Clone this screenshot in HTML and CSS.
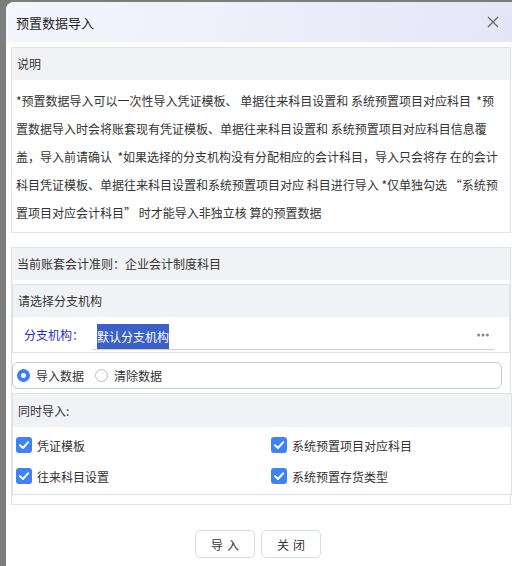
FILE: index.html
```html
<!DOCTYPE html>
<html lang="zh">
<head>
<meta charset="utf-8">
<link rel="stylesheet" href="styles.css">
</head>
<body>
<div class="dialog">
  <div class="titlebar">
    <span class="title">预置数据导入</span>
    <svg class="close" width="12" height="12" viewBox="0 0 12 12"><path d="M1 1L11 11M11 1L1 11" stroke="#666" stroke-width="1.2" fill="none"/></svg>
  </div>
  <div class="content">
    <div class="box desc">
      <div class="sec-head">说明</div>
      <p class="desc-text">*预置数据导入可以一次性导入凭证模板、 单据往来科目设置和 系统预置项目对应科目&nbsp; *预<br>置数据导入时会将账套现有凭证模板、单据往来科目设置和 系统预置项目对应科目信息覆<br>盖，导入前请确认&nbsp; *如果选择的分支机构没有分配相应的会计科目，导入只会将存 在的会计<br>科目凭证模板、单据往来科目设置和系统预置项目对应 科目进行导入 *仅单独勾选 “系统预<br>置项目对应会计科目” 时才能导入非独立核 算的预置数据</p>
    </div>
    <div class="box acct">
      <div class="sec-head">当前账套会计准则：企业会计制度科目</div>
      <div class="box branch">
        <div class="sec-head">请选择分支机构</div>
        <div class="branch-row">
          <span class="branch-label">分支机构：</span>
          <div class="branch-input">
            <span class="selected">默认分支机构</span>
            <svg class="dots" width="12" height="4" viewBox="0 0 12 4"><circle cx="1.6" cy="2" r="1.5" fill="#888"/><circle cx="6" cy="2" r="1.5" fill="#888"/><circle cx="10.4" cy="2" r="1.5" fill="#888"/></svg>
          </div>
        </div>
      </div>
      <div class="radios">
        <label class="radio"><span class="rdot on"></span>导入数据</label>
        <label class="radio"><span class="rdot"></span>清除数据</label>
      </div>
      <div class="box imports">
        <div class="sec-head tall">同时导入:</div>
        <div class="checks">
          <label class="check"><span class="cb"><svg width="16" height="16" viewBox="0 0 16 16"><path d="M4 8.2L7 11L12.2 5.2" stroke="#fff" stroke-width="2" fill="none" stroke-linecap="round" stroke-linejoin="round"/></svg></span>凭证模板</label>
          <label class="check"><span class="cb"><svg width="16" height="16" viewBox="0 0 16 16"><path d="M4 8.2L7 11L12.2 5.2" stroke="#fff" stroke-width="2" fill="none" stroke-linecap="round" stroke-linejoin="round"/></svg></span>系统预置项目对应科目</label>
          <label class="check"><span class="cb"><svg width="16" height="16" viewBox="0 0 16 16"><path d="M4 8.2L7 11L12.2 5.2" stroke="#fff" stroke-width="2" fill="none" stroke-linecap="round" stroke-linejoin="round"/></svg></span>往来科目设置</label>
          <label class="check"><span class="cb"><svg width="16" height="16" viewBox="0 0 16 16"><path d="M4 8.2L7 11L12.2 5.2" stroke="#fff" stroke-width="2" fill="none" stroke-linecap="round" stroke-linejoin="round"/></svg></span>系统预置存货类型</label>
        </div>
      </div>
    </div>
  </div>
  <div class="footer">
    <button class="btn">导入</button>
    <button class="btn">关闭</button>
  </div>
</div>
</body>
</html>
```
FILE: styles.css
```css
* { box-sizing: border-box; }
html, body { margin: 0; padding: 0; }
body {
  background: #7d7d7d;
  width: 512px;
  height: 566px;
  overflow: hidden;
  font-family: "Noto Sans CJK SC", "Noto Sans", sans-serif;
  font-size: 12px;
  color: #333;
}
.dialog {
  margin: 2px 0 0 6px;
  width: 520px;
  height: 580px;
  background: #fff;
  border-radius: 8px;
  overflow: hidden;
}
.titlebar {
  height: 40px;
  display: flex;
  align-items: center;
  justify-content: space-between;
  padding: 0 0 0 10px;
  background: linear-gradient(100deg, #f5f6fc 0%, #eceefa 50%, #e4e6f7 100%);
}
.title { font-size: 13px; color: #222; }
.close { margin-right: 27px; }
.content { padding: 5px 0 0 5px; }
.box {
  border: 1px solid #dfe2e8;
  width: 500px;
  background: #fff;
}
.sec-head {
  height: 32px;
  line-height: 32px;
  padding-left: 5px;
  background: #f0f2f5;
  color: #333;
}
.sec-head.tall { height: 33px; line-height: 33px; }
.desc-text {
  margin: 0;
  padding: 7px 4px 5px 4px;
  line-height: 28px;
  white-space: nowrap;
  color: #333;
}
.acct { margin-top: 14px; padding-bottom: 9px; }
.branch {
  width: 498px;
  margin-top: 4px;
}
.branch-row {
  height: 35px;
  display: flex;
  align-items: center;
  padding-left: 11px;
}
.branch-label { color: #2a2ad2; width: 68px; font-size: 12px; }
.branch-input {
  width: 402px;
  height: 26px;
  margin-top: 5px;
  border-bottom: 1px solid #cfcfcf;
  display: flex;
  align-items: center;
  justify-content: space-between;
  padding-left: 5px;
}
.selected {
  background: #3b60c9;
  color: #fff;
  height: 25px;
  line-height: 25px;
  font-size: 12px;
}
.dots { margin-right: 5px; margin-bottom: 4px; }
.radios {
  margin-top: 9px;
  width: 490px;
  height: 27px;
  border: 1px solid #c6c9cf;
  border-radius: 6px;
  display: flex;
  align-items: center;
  padding-left: 4px;
  gap: 11px;
}
.radio { display: flex; align-items: center; gap: 6px; color: #333; }
.rdot {
  width: 13px;
  height: 13px;
  border-radius: 50%;
  border: 1px solid #b8bcc4;
  background: #fff;
}
.rdot.on {
  border: 4px solid #3b7ef4;
}
.imports { margin-top: 4px; }
.checks {
  display: grid;
  grid-template-columns: 255px 1fr;
  row-gap: 15px;
  padding: 10px 0 10px 3px;
}
.check { display: flex; align-items: center; gap: 5px; height: 16px; color: #333; }
.cb {
  width: 16px;
  height: 16px;
  border-radius: 3px;
  background: #3d82f6;
  display: flex;
}
.footer {
  display: flex;
  gap: 6px;
  padding-left: 189px;
  margin-top: 25px;
}
.btn {
  width: 60px;
  height: 28px;
  background: #fff;
  border: 1px solid #d9dbe0;
  border-radius: 5px;
  font-family: inherit;
  font-size: 12px;
  color: #333;
  letter-spacing: 4px;
  padding: 0 0 0 4px;
}
```
